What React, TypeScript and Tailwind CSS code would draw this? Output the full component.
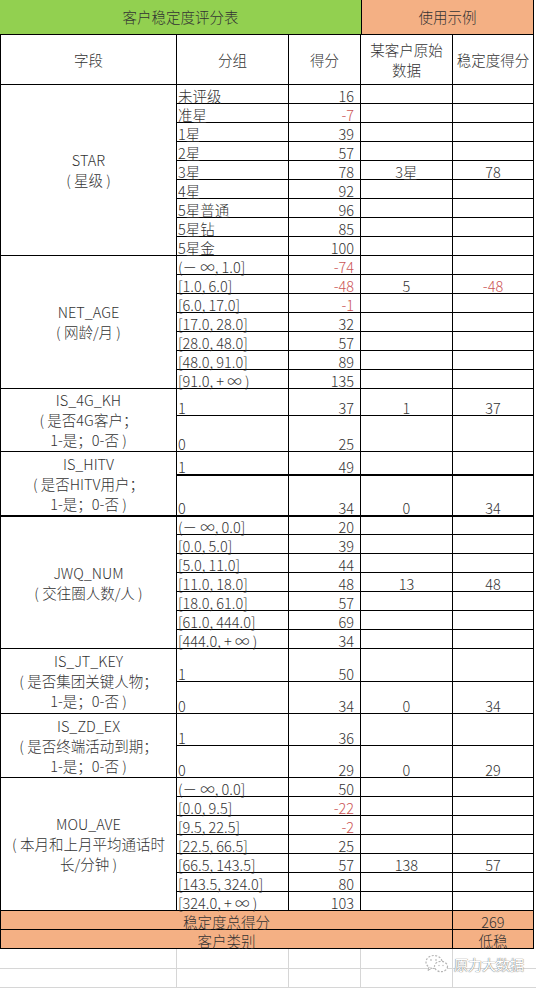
import React from "react";

type R = {
  g: string;
  s: string;
  a?: string;
  b?: string;
  h: string;
  neg?: boolean;
  bneg?: boolean;
  thick?: boolean;
};

type Sec = { label: string[]; rows: R[]; thick?: boolean };

const RED = "text-[#cc5656]";

function DataRow({ r }: { r: R }) {
  const bb = r.thick ? "border-b-2" : "border-b";
  return (
    <div className={`flex ${r.h}`}>
      <div className={`w-[112px] ${bb} border-r border-black flex items-end pl-[1px] leading-[15px] whitespace-nowrap`}>
        {r.g}
      </div>
      <div
        className={`w-[72px] ${bb} border-r border-black flex items-end justify-end pr-[6px] leading-[15px] ${
          r.neg ? RED : ""
        }`}
      >
        {r.s}
      </div>
      <div className={`w-[92px] ${bb} border-r border-black flex items-end justify-center leading-[15px]`}>
        {r.a ?? ""}
      </div>
      <div
        className={`w-[81px] ${bb} border-r border-black flex items-end justify-center leading-[15px] ${
          r.bneg ? RED : ""
        }`}
      >
        {r.b ?? ""}
      </div>
    </div>
  );
}

function Section({ s }: { s: Sec }) {
  return (
    <div className="flex">
      <div
        className={`w-[176px] border-r ${
          s.thick ? "border-b-2" : "border-b"
        } border-black flex flex-col items-center justify-center leading-[20px] text-center`}
      >
        {s.label.map((l, i) => (
          <div key={i} className="whitespace-nowrap">
            {l}
          </div>
        ))}
      </div>
      <div className="flex flex-col">
        {s.rows.map((r, i) => (
          <DataRow key={i} r={r} />
        ))}
      </div>
    </div>
  );
}

const H19 = "h-[19px]";

const sections: Sec[] = [
  {
    label: ["STAR", "( 星级 )"],
    rows: [
      { g: "未评级", s: "16", h: H19 },
      { g: "准星", s: "-7", neg: true, h: H19 },
      { g: "1星", s: "39", h: H19 },
      { g: "2星", s: "57", h: H19 },
      { g: "3星", s: "78", a: "3星", b: "78", h: H19 },
      { g: "4星", s: "92", h: H19 },
      { g: "5星普通", s: "96", h: H19 },
      { g: "5星钻", s: "85", h: H19 },
      { g: "5星金", s: "100", h: H19 },
    ],
  },
  {
    label: ["NET_AGE", "( 网龄/月 )"],
    rows: [
      { g: "(－ ∞, 1.0]", s: "-74", neg: true, h: H19 },
      { g: "[1.0, 6.0]", s: "-48", neg: true, a: "5", b: "-48", bneg: true, h: H19 },
      { g: "[6.0, 17.0]", s: "-1", neg: true, h: H19 },
      { g: "[17.0, 28.0]", s: "32", h: H19 },
      { g: "[28.0, 48.0]", s: "57", h: H19 },
      { g: "[48.0, 91.0]", s: "89", h: H19 },
      { g: "[91.0, + ∞ )", s: "135", h: H19 },
    ],
  },
  {
    label: ["IS_4G_KH", "( 是否4G客户；", "1-是；0-否 )"],
    rows: [
      { g: "1", s: "37", a: "1", b: "37", h: "h-[27px]" },
      { g: "0", s: "25", h: "h-[36px]" },
    ],
  },
  {
    label: ["IS_HITV", "( 是否HITV用户；", "1-是；0-否 )"],
    thick: true,
    rows: [
      { g: "1", s: "49", h: "h-[24px]", thick: true },
      { g: "0", s: "34", a: "0", b: "34", h: "h-[41px]", thick: true },
    ],
  },
  {
    label: ["JWQ_NUM", "( 交往圈人数/人 )"],
    rows: [
      { g: "(－ ∞, 0.0]", s: "20", h: "h-[18px]" },
      { g: "[0.0, 5.0]", s: "39", h: H19 },
      { g: "[5.0, 11.0]", s: "44", h: H19 },
      { g: "[11.0, 18.0]", s: "48", a: "13", b: "48", h: H19 },
      { g: "[18.0, 61.0]", s: "57", h: H19 },
      { g: "[61.0, 444.0]", s: "69", h: H19 },
      { g: "[444.0, + ∞ )", s: "34", h: H19 },
    ],
  },
  {
    label: ["IS_JT_KEY", "( 是否集团关键人物；", "1-是；0-否 )"],
    rows: [
      { g: "1", s: "50", h: "h-[33px]" },
      { g: "0", s: "34", a: "0", b: "34", h: "h-[32px]" },
    ],
  },
  {
    label: ["IS_ZD_EX", "( 是否终端活动到期；", "1-是；0-否 )"],
    rows: [
      { g: "1", s: "36", h: "h-[32px]" },
      { g: "0", s: "29", a: "0", b: "29", h: "h-[32px]" },
    ],
  },
  {
    label: ["MOU_AVE", "( 本月和上月平均通话时", "长/分钟 )"],
    rows: [
      { g: "(－ ∞, 0.0]", s: "50", h: H19 },
      { g: "[0.0, 9.5]", s: "-22", neg: true, h: H19 },
      { g: "[9.5, 22.5]", s: "-2", neg: true, h: H19 },
      { g: "[22.5, 66.5]", s: "25", h: H19 },
      { g: "[66.5, 143.5]", s: "57", a: "138", b: "57", h: H19 },
      { g: "[143.5, 324.0]", s: "80", h: H19 },
      { g: "[324.0, + ∞ )", s: "103", h: H19 },
    ],
  },
];

function WeChatIcon() {
  return (
    <svg width="24" height="20" viewBox="0 0 24 20">
      <ellipse cx="9" cy="8" rx="8" ry="6.5" fill="#fff" stroke="#b5b5b5" strokeWidth="1.2" strokeDasharray="2 1.5" />
      <path d="M4 13 L3 16.5 L7 14" fill="#fff" stroke="#b5b5b5" strokeWidth="1" />
      <ellipse cx="16" cy="12.5" rx="6.5" ry="5.2" fill="#fff" stroke="#b5b5b5" strokeWidth="1.2" strokeDasharray="2 1.5" />
      <circle cx="6" cy="6" r="0.9" fill="#c5c5c5" />
      <circle cx="11" cy="6" r="0.9" fill="#c5c5c5" />
      <circle cx="14" cy="11.5" r="0.8" fill="#c5c5c5" />
      <circle cx="18" cy="11.5" r="0.8" fill="#c5c5c5" />
    </svg>
  );
}

export default function App() {
  return (
    <div className="w-[536px] h-[988px] bg-white overflow-hidden text-[#333] text-[14.5px] font-light font-['Noto_Sans_CJK_SC','Liberation_Sans',sans-serif]">
      {/* title row */}
      <div className="flex h-[35px] w-[534px] border-b border-black">
        <div className="w-[361px] bg-[#92d050] flex items-center justify-center">客户稳定度评分表</div>
        <div className="w-[173px] bg-[#f4b084] border-l border-r border-black flex items-center justify-center">
          使用示例
        </div>
      </div>
      <div className="w-[534px] border-l border-black">
        {/* header row */}
        <div className="flex h-[50px]">
          <div className="w-[176px] border-r border-b border-black flex items-center justify-center">字段</div>
          <div className="w-[112px] border-r border-b border-black flex items-center justify-center">分组</div>
          <div className="w-[72px] border-r border-b border-black flex items-center justify-center">得分</div>
          <div className="w-[92px] border-r border-b border-black flex flex-col items-center justify-center leading-[20px]">
            <div>某客户原始</div>
            <div>数据</div>
          </div>
          <div className="w-[81px] border-r border-b border-black flex items-center justify-center whitespace-nowrap">
            稳定度得分
          </div>
        </div>
        {sections.map((s, i) => (
          <Section key={i} s={s} />
        ))}
        {/* totals */}
        <div className="flex h-[19px] bg-[#f4b084]">
          <div className="w-[452px] border-r border-b border-black flex items-end justify-center leading-[15px]">
            稳定度总得分
          </div>
          <div className="w-[81px] border-r border-b border-black flex items-end justify-center leading-[15px]">269</div>
        </div>
        <div className="flex h-[19px] bg-[#f4b084]">
          <div className="w-[452px] border-r border-b border-black flex items-end justify-center leading-[15px]">
            客户类别
          </div>
          <div className="w-[81px] border-r border-b border-black flex items-end justify-center leading-[15px]">低稳</div>
        </div>
      </div>
      {/* empty sheet grid */}
      <div className="relative">
        <div className="flex h-[20px]">
          <div className="w-[177px] border-r border-b border-[#d6d6d6]" />
          <div className="w-[112px] border-r border-b border-[#d6d6d6]" />
          <div className="w-[72px] border-r border-b border-[#d6d6d6]" />
          <div className="w-[92px] border-r border-b border-[#d6d6d6]" />
          <div className="flex-1 border-b border-[#d6d6d6]" />
        </div>
        <div className="flex h-[19px]">
          <div className="w-[177px] border-r border-b border-[#d6d6d6]" />
          <div className="w-[112px] border-r border-b border-[#d6d6d6]" />
          <div className="w-[72px] border-r border-b border-[#d6d6d6]" />
          <div className="w-[92px] border-r border-b border-[#d6d6d6]" />
          <div className="flex-1 border-b border-[#d6d6d6]" />
        </div>
        <div className="absolute left-[425px] top-[5px] flex items-center gap-[5px]">
          <WeChatIcon />
          <span className="text-[14px] font-normal text-white leading-[16px] [text-shadow:0_0_1px_#777,0_0_1px_#777]">
            原力大数据
          </span>
        </div>
      </div>
    </div>
  );
}
